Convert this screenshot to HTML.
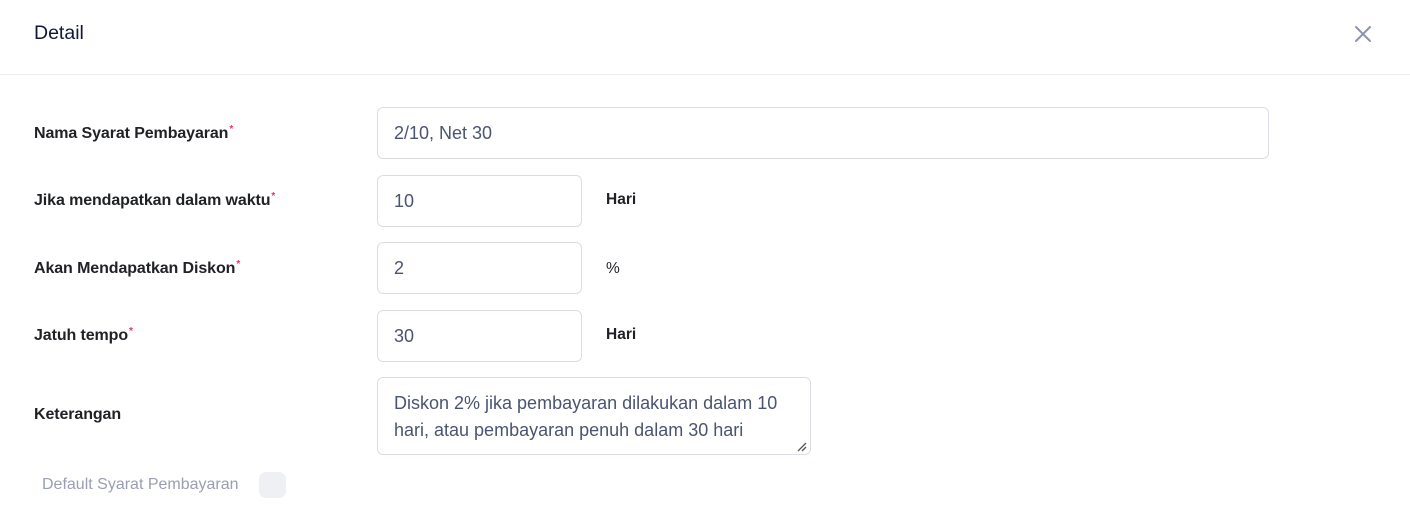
<!DOCTYPE html>
<html><head><meta charset="utf-8"><style>
*{box-sizing:border-box;margin:0;padding:0}
body{width:1410px;height:517px;background:#fff;font-family:"Liberation Sans",Arial,sans-serif;position:relative;overflow:hidden}
.a{position:absolute;white-space:nowrap}
.t{left:34px;top:22px;font-size:19.5px;color:#101936}
.hr{left:0;top:74px;width:1410px;height:1px;background:#eceef2}
.lb{left:34px;font-size:16px;font-weight:bold;color:#1f2125;letter-spacing:-0.1px}
.lb sup{color:#e8365c;font-size:10px;vertical-align:6px;margin-left:1px}
.in{border:1px solid #dadde8;border-radius:6px;background:#fff;font-size:18px;color:#4b5470;padding-left:16px;display:flex;align-items:center}
.u{left:606px;font-size:15.5px;color:#1f2125}
</style></head><body>
<div class="a t">Detail</div>
<svg class="a" style="left:1354px;top:25px" width="18" height="18" viewBox="0 0 18 18"><path d="M2 2L16 16M16 2L2 16" stroke="#8e94aa" stroke-width="2" stroke-linecap="round"/></svg>
<div class="a hr"></div>

<div class="a lb" style="top:124px">Nama Syarat Pembayaran<sup>*</sup></div>
<div class="a in" style="left:377px;top:107px;width:892px;height:52px">2/10, Net 30</div>

<div class="a lb" style="top:191px">Jika mendapatkan dalam waktu<sup>*</sup></div>
<div class="a in" style="left:377px;top:175px;width:205px;height:52px">10</div>
<div class="a u" style="top:191px;font-weight:bold">Hari</div>

<div class="a lb" style="top:259px">Akan Mendapatkan Diskon<sup>*</sup></div>
<div class="a in" style="left:377px;top:242px;width:205px;height:52px">2</div>
<div class="a u" style="top:260px">%</div>

<div class="a lb" style="top:326px">Jatuh tempo<sup>*</sup></div>
<div class="a in" style="left:377px;top:310px;width:205px;height:52px">30</div>
<div class="a u" style="top:326px;font-weight:bold">Hari</div>

<div class="a lb" style="top:406px">Keterangan</div>
<div class="a in" style="left:377px;top:377px;width:434px;height:78px;display:block;padding-top:12px;line-height:27px;white-space:nowrap;font-size:18px">Diskon 2% jika pembayaran dilakukan dalam 10<br>hari, atau pembayaran penuh dalam 30 hari</div>
<svg class="a" style="left:796px;top:441px" width="12" height="12" viewBox="0 0 12 12"><path d="M2 10L10 2M6 10L10 6" stroke="#555" stroke-width="1.3"/></svg>

<div class="a" style="left:42px;top:476px;font-size:16px;color:#9a9fb1">Default Syarat Pembayaran</div>
<div class="a" style="left:259px;top:472px;width:27px;height:26px;border-radius:7px;background:#eff0f3"></div>
</body></html>
